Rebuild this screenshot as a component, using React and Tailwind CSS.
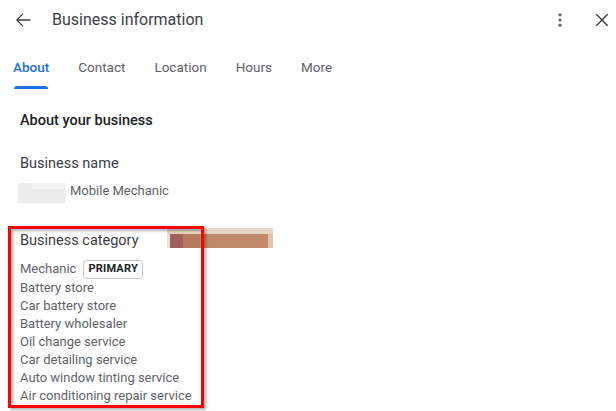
import React from "react";

const tabs = ["About", "Contact", "Location", "Hours", "More"];

const categories = [
  "Battery store",
  "Car battery store",
  "Battery wholesaler",
  "Oil change service",
  "Car detailing service",
  "Auto window tinting service",
  "Air conditioning repair service",
];

function Header() {
  return (
    <div className="h-[40px] flex items-center pl-[12px] pr-[4px]">
      <svg width="22" height="22" viewBox="0 0 24 24" className="text-[#3c4043]">
        <path fill="currentColor" d="M20 11.2H6.9l5.5-5.5L11.5 4.8 4.3 12l7.2 7.2.9-.9-5.5-5.5H20v-1.6z" />
      </svg>
      <h1 className="ml-[18px] text-[16px] leading-[20px] text-[#3c4043]">
        Business information
      </h1>
      <div className="ml-auto flex items-center">
        <svg width="20" height="20" viewBox="0 0 20 20" className="mr-[22px]">
          <circle cx="10" cy="4.8" r="1.6" fill="#5f6368" />
          <circle cx="10" cy="10" r="1.6" fill="#5f6368" />
          <circle cx="10" cy="15.2" r="1.6" fill="#5f6368" />
        </svg>
        <svg width="20" height="20" viewBox="0 0 20 20">
          <path d="M4.3 4.3L15.7 15.7M15.7 4.3L4.3 15.7" stroke="#3c4043" strokeWidth="1.5" />
        </svg>
      </div>
    </div>
  );
}

function Tabs() {
  return (
    <div className="flex gap-[29px] pl-[13px]">
      {tabs.map((t, i) => (
        <div key={t} className="flex flex-col pt-[17px]">
          <span
            className={
              i === 0
                ? "text-[13.5px] leading-[20px] font-medium text-[#1a73e8]"
                : "text-[13.5px] leading-[20px] text-[#5f6368]"
            }
          >
            {t}
          </span>
          <div
            className={
              i === 0
                ? "mt-[9px] h-[3px] mx-[1px] rounded-t-[3px] bg-[#1a73e8]"
                : "mt-[9px] h-[3px]"
            }
          />
        </div>
      ))}
    </div>
  );
}

function Blur() {
  // pixelated redaction next to the category title
  return (
    <div className="absolute left-[147px] top-[-3px] w-[106px] h-[20px] flex flex-col">
      <div className="h-[6px] bg-[#e7d5c8]" />
      <div className="flex h-[14px]">
        <div className="w-[3px] bg-[#ecdfd6]" />
        <div className="w-[13px] bg-[#a1615b]" />
        <div className="w-[17px] bg-[#b67b5d]" />
        <div className="w-[68px] bg-[#c08a6a]" />
        <div className="w-[5px] bg-[#dcc3b2]" />
      </div>
    </div>
  );
}

export default function App() {
  return (
    <div className="w-[616px] h-[411px] bg-white overflow-hidden font-['Roboto',_'Liberation_Sans',_sans-serif]">
      <Header />
      <Tabs />

      <div className="ml-[20px] mt-[22px] text-[14.5px] leading-[20px] font-medium text-[#202124]">
        About your business
      </div>

      <div className="ml-[20px] mt-[23px] text-[14.5px] leading-[20px] text-[#3c4043]">
        Business name
      </div>
      <div className="ml-[18px] mt-[7px] flex items-start h-[20px]">
        <div className="mt-[2px] w-[48px] h-[20px] bg-[#ececec] flex flex-col">
          <div className="h-[6px] w-[34px] ml-[14px] bg-[#f3f3f3]" />
        </div>
        <span className="ml-[4px] text-[13px] leading-[20px] text-[#5f6368]">Mobile Mechanic</span>
      </div>

      <div className="relative ml-[8px] mt-[25px] w-[196px] h-[182px] pt-[5px] pl-[12px]">
        <div className="relative text-[14.5px] leading-[20px] text-[#3c4043]">
          Business category
          <Blur />
        </div>
        <div className="mt-[8px] flex items-center h-[20px]">
          <span className="text-[13px] leading-[18px] text-[#5f6368]">Mechanic</span>
          <span className="ml-[7px] h-[19px] px-[4px] flex items-center border border-[#c4c7cc] rounded-[4px] text-[11px] font-bold tracking-[0.2px] text-[#202124]">
            PRIMARY
          </span>
        </div>
        {categories.map((c) => (
          <div key={c} className="text-[13px] leading-[18px] text-[#5f6368] whitespace-nowrap">
            {c}
          </div>
        ))}
        <div className="pointer-events-none absolute inset-0 border-[3px] border-[#ff0000] shadow-[2px_2px_3px_rgba(0,0,0,0.3),inset_2px_2px_3px_rgba(0,0,0,0.3)]" />
      </div>
    </div>
  );
}
